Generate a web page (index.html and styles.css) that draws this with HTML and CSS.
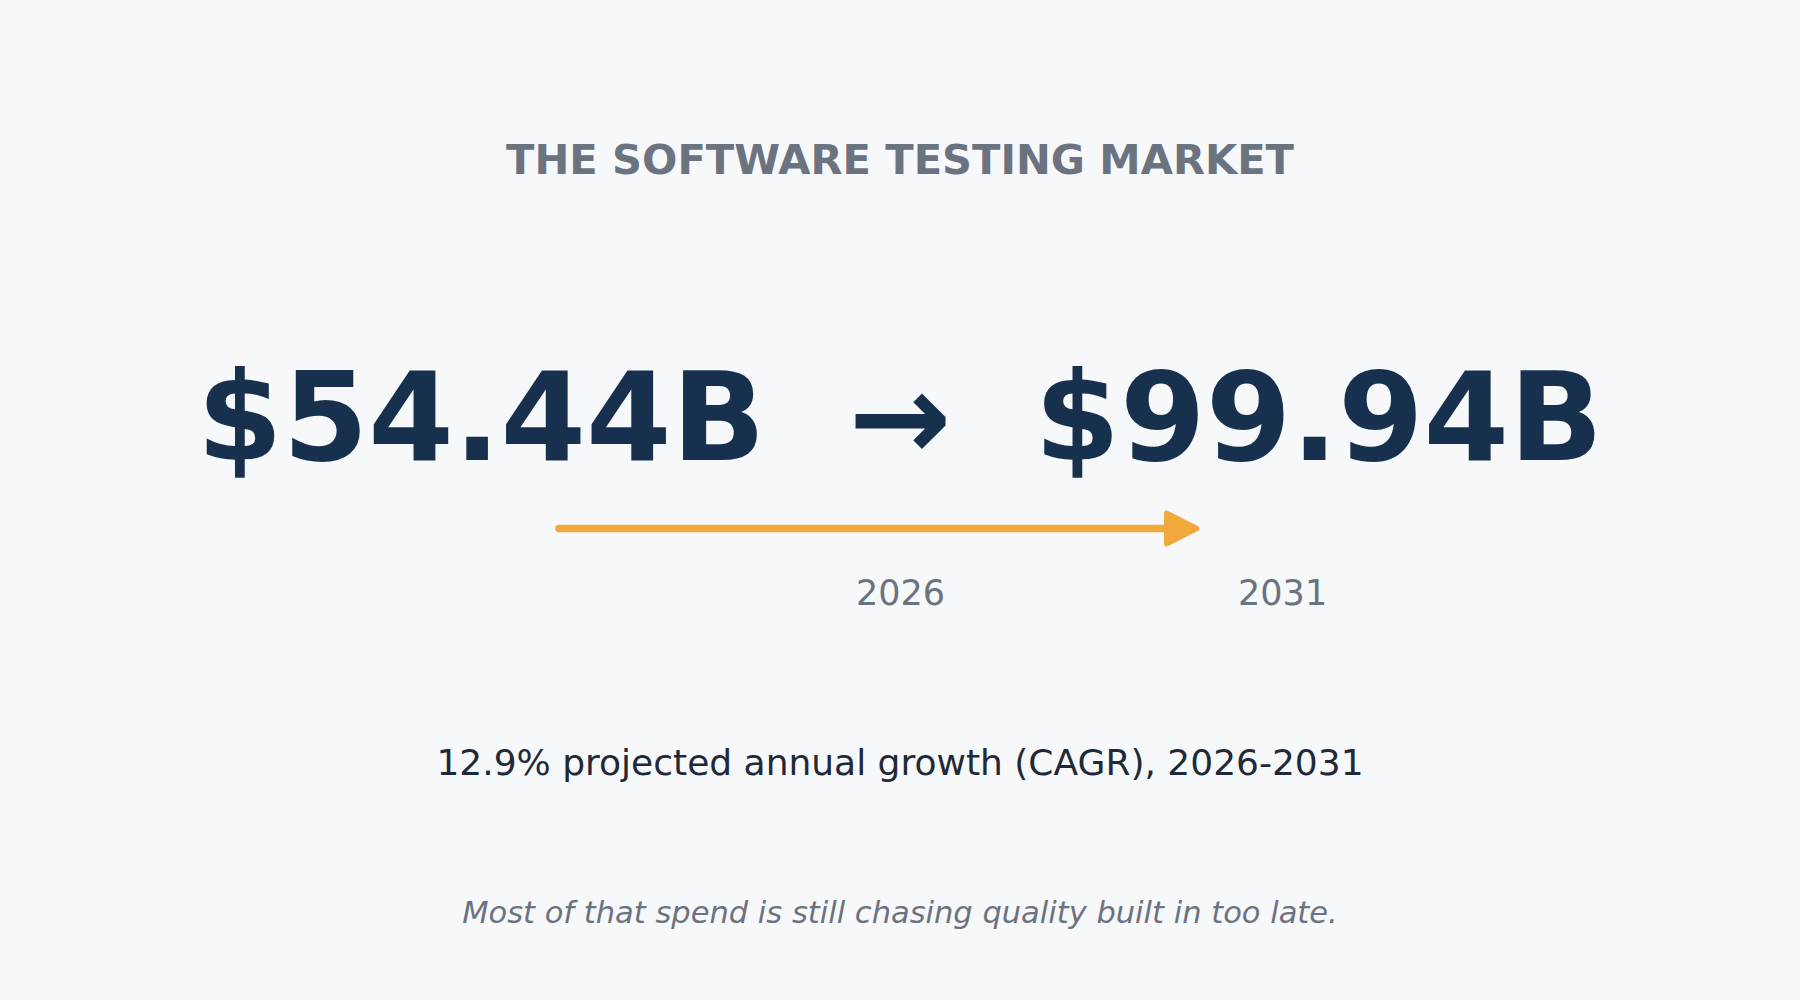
FILE: index.html
```html
<!DOCTYPE html>
<html lang="en">
<head>
<meta charset="utf-8">
<title>The Software Testing Market</title>
<link rel="stylesheet" href="styles.css">
</head>
<body>
<main class="slide">
  <h1 class="title">THE SOFTWARE TESTING MARKET</h1>
  <div class="figures">
    <span class="figure">$54.44B</span>
    <span class="figure arrow">→</span>
    <span class="figure">$99.94B</span>
  </div>
  <div class="timeline">
    <svg class="growth-arrow" width="660" height="41" viewBox="0 0 660 41" aria-hidden="true">
      <line x1="13" y1="20.5" x2="625" y2="20.5" stroke="#f2a93b" stroke-width="7.5" stroke-linecap="round"/>
      <polygon points="620.5,5 651,20.5 620.5,36" fill="#f2a93b" stroke="#f2a93b" stroke-width="5" stroke-linejoin="round"/>
    </svg>
  </div>
  <div class="years">
    <span class="year">2026</span>
    <span class="year">2031</span>
  </div>
  <p class="cagr">12.9% projected annual growth (CAGR), 2026-2031</p>
  <p class="note">Most of that spend is still chasing quality built in too late.</p>
</main>
</body>
</html>
```
FILE: styles.css
```css
html, body {
  margin: 0;
  padding: 0;
  background: #f7f8fa;
}

body {
  width: 1800px;
  height: 1000px;
  overflow: hidden;
  font-family: "DejaVu Sans", "Liberation Sans", sans-serif;
}

.slide {
  display: flex;
  flex-direction: column;
  align-items: center;
  padding-top: 139px;
}

.title {
  margin: 0;
  font-size: 41.6px;
  line-height: 1;
  font-weight: 700;
  color: #6b7280;
}

.figures {
  display: flex;
  align-items: baseline;
  gap: 83px;
  margin-top: 175px;
  font-size: 123px;
  line-height: 1;
  font-weight: 700;
  color: #17304d;
}

.timeline {
  align-self: stretch;
  margin-top: 29px;
  line-height: 0;
}

.growth-arrow {
  display: block;
  margin-left: 546px;
}

.years {
  align-self: stretch;
  display: flex;
  gap: 293px;
  padding-left: 856px;
  margin-top: 27px;
}

.year {
  font-size: 35px;
  line-height: 1;
  color: #6b7280;
}

.cagr {
  margin: 134px 0 0;
  font-size: 36px;
  line-height: 1;
  color: #1f2937;
}

.note {
  margin: 117px 0 0;
  font-size: 30.5px;
  line-height: 1;
  font-style: italic;
  color: #6b7280;
}
```
